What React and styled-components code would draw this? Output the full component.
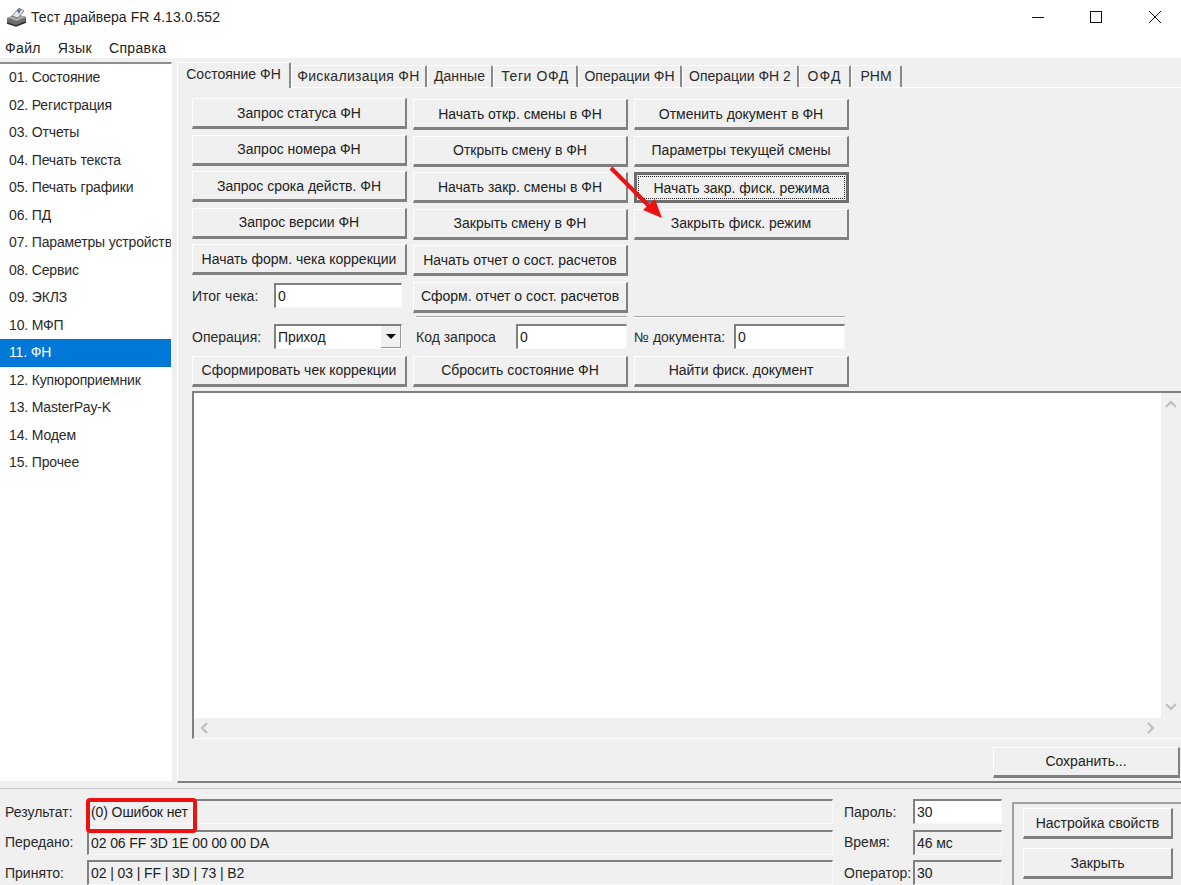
import React from "react";
import styled, { createGlobalStyle, css } from "styled-components";

const Global = createGlobalStyle`
  html, body { margin: 0; padding: 0; background: #f0f0f0; }
  * { box-sizing: border-box; }
  body { font-family: "Liberation Sans", Arial, sans-serif; font-size: 14px; color: #1a1a1a; }
`;

const Win = styled.div`
  position: relative; width: 1181px; height: 885px; overflow: hidden;
  display: flex; flex-direction: column; background: #f0f0f0;
`;
const TitleBar = styled.div`
  height: 34px; flex: none; background: #fff; display: flex; align-items: flex-start; padding-left: 6px;
`;
const TitleText = styled.span`
  margin: 9px 0 0 3px; font-size: 14px; line-height: 17px; color: #222; letter-spacing: 0.05px; flex: 1;
`;
const WinBtn = styled.div`
  width: 58px; height: 34px; display: flex; align-items: center; justify-content: center; flex: none;
`;
const CloseBtn = styled(WinBtn)`
  width: 56px; height: 37px; padding: 0 0 3px 4px; border-bottom: 1px solid #e4e4e4;
`;
const MenuBar = styled.div`
  height: 24px; flex: none; background: #fff; display: flex; gap: 17px; padding: 6px 0 0 5px;
  font-size: 14px; line-height: 16px; color: #222; letter-spacing: 0.35px;
`;
const Main = styled.div`
  height: 725px; flex: none; display: flex;
`;
const Sidebar = styled.div`
  width: 172px; flex: none; background: #fff; border-top: 2px solid #8f8f8f; border-right: 1px solid #fff; margin: 4px 0 2px;
  overflow: hidden;
`;
const SideItem = styled.div`
  height: 27.5px; line-height: 27px; padding-left: 9px; white-space: nowrap; font-size: 14px; letter-spacing: -0.15px;
  color: ${p => (p.$active ? "#fff" : "#2a2a2a")};
  background: ${p => (p.$active ? "#0078d7" : "transparent")};
`;
const Content = styled.div`
  flex: 1; padding: 4px 0 0 5px; display: flex; flex-direction: column; min-width: 0;
`;
const Tabs = styled.div`
  display: flex; height: 25px; flex: none; align-items: flex-end;
`;
const Tab = styled.div`
  height: ${p => (p.$active ? "26px" : "22px")};
  width: ${p => p.$w}px;
  background: #f0f0f0; white-space: nowrap; text-align: center; letter-spacing: ${p => p.$ls || 0}px;
  line-height: ${p => (p.$active ? "22px" : "21px")}; font-size: 14px; color: #2a2a2a;
  border-top: 1px solid #fff; border-left: 1px solid #fff; border-right: 2px solid #8a8a8a;
  border-radius: 2px 2px 0 0; margin-bottom: ${p => (p.$active ? "-1px" : "0")};
  position: relative; z-index: ${p => (p.$active ? 1 : 0)};
`;
const Panel = styled.div`
  flex: 1; border-top: 1px solid #fff; border-left: 1px solid #fff; border-bottom: 2px solid #808080;
  padding: 10px 0 0 14px; display: flex; flex-direction: column;
`;
const BtnGrid = styled.div`
  display: grid; grid-template-columns: 215px 215px 215px; column-gap: 6px; align-items: start;
  width: 657px; margin-top: ${p => p.$mt || 0}px;
`;
const Col = styled.div`
  display: flex; flex-direction: column; gap: 5.5px; margin-top: ${p => p.$mt || 0}px;
`;
const Button = styled.div`
  width: ${p => (p.$w ? `${p.$w}px` : "auto")};
  height: 31px; display: flex; align-items: center; justify-content: center; white-space: nowrap;
  font-size: 14px; color: #222; background: #f0f0f0;
  border-top: 1px solid #fff; border-left: 1px solid #fff; border-right: 2px solid #808080; border-bottom: 3px solid #808080;
  ${p => p.$focused && css`
    border: 3px solid #6e6e6e;
    outline: 1px dotted #222; outline-offset: -5px;
  `}
`;
const FormRow = styled.div`
  display: flex; align-items: center; height: ${p => p.$h || 30}px;
`;
const Label = styled.span`
  font-size: 14px; color: #2a2a2a; white-space: nowrap; width: ${p => p.$w}px; flex: none;
  margin-left: ${p => p.$ml || 0}px;
`;
const Input = styled.div`
  width: ${p => p.$w}px; height: 25px; flex: none; background: ${p => (p.$flat ? "#f0f0f0" : "#fff")};
  border-top: 2px solid #808080; border-left: 2px solid #808080;
  border-right: 1px solid #f8f8f8; border-bottom: 1px solid #f8f8f8;
  padding-left: 2px; font-size: 14px; color: #222; display: flex; align-items: center;
  white-space: nowrap; letter-spacing: -0.1px;
`;
const DropArrow = styled.div`
  margin-left: auto; width: 20px; height: 100%; background: #f0f0f0; display: flex; align-items: center; justify-content: center;
  border-bottom: 1px solid #999; border-right: 1px solid #999;
  &::after { content: ""; border-left: 5px solid transparent; border-right: 5px solid transparent; border-top: 5px solid #111; }
`;
const Rule = styled.div`
  border-top: 1px solid #a8a8a8; border-bottom: 1px solid #fff; height: 2px; margin-left: ${p => p.$ml}px;
  width: ${p => p.$w}px;
`;
const Rules = styled.div`
  display: flex; height: 9px; align-items: center;
`;
const Memo = styled.div`
  margin-top: 4px; height: 348px; flex: none; display: flex; flex-direction: column;
  border-top: 2px solid #808080; border-left: 2px solid #808080; border-bottom: 1px solid #fff;
`;
const MemoBody = styled.div`
  flex: 1; display: flex; min-height: 0;
`;
const MemoText = styled.div` flex: 1; background: #fff; `;
const VScroll = styled.div`
  width: 20px; background: #f0f0f0; display: flex; flex-direction: column; justify-content: space-between; align-items: center; padding: 6px 0 6px;
`;
const HScroll = styled.div`
  height: 20px; background: #f0f0f0; display: flex; justify-content: space-between; align-items: center; padding: 0 25px 0 5px;
`;
const SaveRow = styled.div`
  display: flex; justify-content: flex-end; padding: 8px 1px 0 0;
`;
const Bottom = styled.div`
  flex: 1; border-top: 1px solid #c8c8c8; margin-top: 5px; display: flex; padding: 10px 0 0 5px;
`;
const StatusCol = styled.div`
  display: flex; flex-direction: column; gap: 5.5px; width: 830px; flex: none;
`;
const StatusRow = styled.div` display: flex; align-items: center; height: 25px; `;
const SmallCol = styled.div`
  display: flex; flex-direction: column; gap: 5.5px; width: 166px; flex: none; margin-left: 9px;
`;
const GroupBox = styled.div`
  flex: 1; border-top: 2px solid #a0a0a0; border-left: 2px solid #a0a0a0; margin: 3px 0 0 2px; height: 90px;
  display: flex; flex-direction: column; gap: 9px; padding: 4px 0 0 9px;
`;
const Overlay = styled.svg`
  position: absolute; left: 0; top: 0; pointer-events: none;
`;

const Chevron = ({ d }) => (
  <svg width="12" height="12" viewBox="0 0 12 12" fill="none" stroke="#bdbdbd" strokeWidth="2"><path d={d} /></svg>
);

const PrinterIcon = () => (
  <svg width="22" height="22" viewBox="0 0 22 22" style={{ marginTop: 6 }}>
    <path d="M1 12 L10 8 L20 11 L20 16 L10 20 L1 17 Z" fill="#6d6d6d" />
    <path d="M1 12 L10 8 L20 11 L11 15 Z" fill="#a8a8a8" />
    <path d="M6 10 L13 2 L18 5 L12 12 Z" fill="#e6e6e6" stroke="#555" strokeWidth="0.7" />
    <path d="M11 4 L15 3 L13 8 Z" fill="#3f55c8" />
    <path d="M1 17 L10 20 L20 16" stroke="#2c2c2c" strokeWidth="1.4" fill="none" />
    <path d="M4 13 L6 14" stroke="#c33" strokeWidth="1.2" />
  </svg>
);

const sideItems = ["01. Состояние","02. Регистрация","03. Отчеты","04. Печать текста","05. Печать графики","06. ПД","07. Параметры устройства","08. Сервис","09. ЭКЛЗ","10. МФП","11. ФН","12. Купюроприемник","13. MasterPay-K","14. Модем","15. Прочее"];
const tabs = [
  { t: "Состояние ФН", w: 114 },
  { t: "Фискализация ФН", w: 136, ls: 0.3 },
  { t: "Данные", w: 66, ls: 0.1 },
  { t: "Теги ОФД", w: 85, ls: 0.6 },
  { t: "Операции ФН", w: 104 },
  { t: "Операции ФН 2", w: 117 },
  { t: "ОФД", w: 52, ls: 1.2 },
  { t: "РНМ", w: 51 },
];
const col1 = ["Запрос статуса ФН","Запрос номера ФН","Запрос срока действ. ФН","Запрос версии ФН","Начать форм. чека коррекции"];
const col2 = ["Начать откр. смены в ФН","Открыть смену в ФН","Начать закр. смены в ФН","Закрыть смену в ФН","Начать отчет о сост. расчетов","Сформ. отчет о сост. расчетов"];
const col3 = ["Отменить документ в ФН","Параметры текущей смены","Начать закр. фиск. режима","Закрыть фиск. режим"];

export default function App() {
  return (
    <Win>
      <Global />
      <TitleBar>
        <PrinterIcon />
        <TitleText>Тест драйвера FR 4.13.0.552</TitleText>
        <WinBtn><svg width="12" height="12" viewBox="0 0 12 12"><path d="M0 6.5H12" stroke="#111" /></svg></WinBtn>
        <WinBtn><svg width="12" height="12" viewBox="0 0 12 12" fill="none"><rect x="0.5" y="0.5" width="11" height="11" stroke="#111" /></svg></WinBtn>
        <CloseBtn><svg width="12" height="12" viewBox="0 0 12 12" fill="none"><path d="M0 0L12 12M12 0L0 12" stroke="#111" /></svg></CloseBtn>
      </TitleBar>
      <MenuBar><span>Файл</span><span>Язык</span><span>Справка</span></MenuBar>
      <Main>
        <Sidebar>
          {sideItems.map(s => <SideItem key={s} $active={s === "11. ФН"}>{s}</SideItem>)}
        </Sidebar>
        <Content>
          <Tabs>
            {tabs.map((tab, i) => <Tab key={tab.t} $w={tab.w} $ls={tab.ls} $active={i === 0}>{tab.t}</Tab>)}
          </Tabs>
          <Panel>
            <BtnGrid>
              <Col>
                {col1.map(t => <Button key={t}>{t}</Button>)}
                <FormRow><Label $w={82}>Итог чека:</Label><Input $w={128}>0</Input></FormRow>
              </Col>
              <Col $mt={1}>
                {col2.map(t => <Button key={t}>{t}</Button>)}
              </Col>
              <Col $mt={1}>
                {col3.map((t, i) => <Button key={t} $focused={i === 2}>{t}</Button>)}
              </Col>
            </BtnGrid>
            <Rules>
              <Rule $w={211} $ml={224} />
              <Rule $w={211} $ml={7} />
            </Rules>
            <FormRow>
              <Label $w={82}>Операция:</Label>
              <Input $w={128}>Приход<DropArrow /></Input>
              <Label $w={100} $ml={14}>Код запроса</Label>
              <Input $w={111}>0</Input>
              <Label $w={100} $ml={7}>№ документа:</Label>
              <Input $w={111}>0</Input>
            </FormRow>
            <BtnGrid $mt={4}>
              <Button>Сформировать чек коррекции</Button>
              <Button>Сбросить состояние ФН</Button>
              <Button>Найти фиск. документ</Button>
            </BtnGrid>
            <Memo>
              <MemoBody>
                <MemoText />
                <VScroll>
                  <Chevron d="M1 8L6 3L11 8" />
                  <Chevron d="M1 4L6 9L11 4" />
                </VScroll>
              </MemoBody>
              <HScroll>
                <Chevron d="M8 1L3 6L8 11" />
                <Chevron d="M4 1L9 6L4 11" />
              </HScroll>
            </Memo>
            <SaveRow><Button $w={187}>Сохранить...</Button></SaveRow>
          </Panel>
        </Content>
      </Main>
      <Bottom>
        <StatusCol>
          <StatusRow><Label $w={82}>Результат:</Label><Input $w={746} $flat>(0) Ошибок нет</Input></StatusRow>
          <StatusRow><Label $w={82}>Передано:</Label><Input $w={746} $flat>02 06 FF 3D 1E 00 00 00 DA</Input></StatusRow>
          <StatusRow><Label $w={82}>Принято:</Label><Input $w={746} $flat>02 | 03 | FF | 3D | 73 | B2</Input></StatusRow>
        </StatusCol>
        <SmallCol>
          <StatusRow><Label $w={69}>Пароль:</Label><Input $w={89}>30</Input></StatusRow>
          <StatusRow><Label $w={69}>Время:</Label><Input $w={89} $flat>46 мс</Input></StatusRow>
          <StatusRow><Label $w={69}>Оператор:</Label><Input $w={89} $flat>30</Input></StatusRow>
        </SmallCol>
        <GroupBox>
          <Button $w={150}>Настройка свойств</Button>
          <Button $w={150}>Закрыть</Button>
        </GroupBox>
      </Bottom>
      <Overlay width="1181" height="885" viewBox="0 0 1181 885">
        <path d="M611 168L650 207" stroke="#ee1111" strokeWidth="4" />
        <path d="M662 218L643 210L655 199Z" fill="#ee1111" />
        <rect x="88" y="800" width="107" height="31" rx="2" fill="none" stroke="#ee1111" strokeWidth="4" />
      </Overlay>
    </Win>
  );
}
